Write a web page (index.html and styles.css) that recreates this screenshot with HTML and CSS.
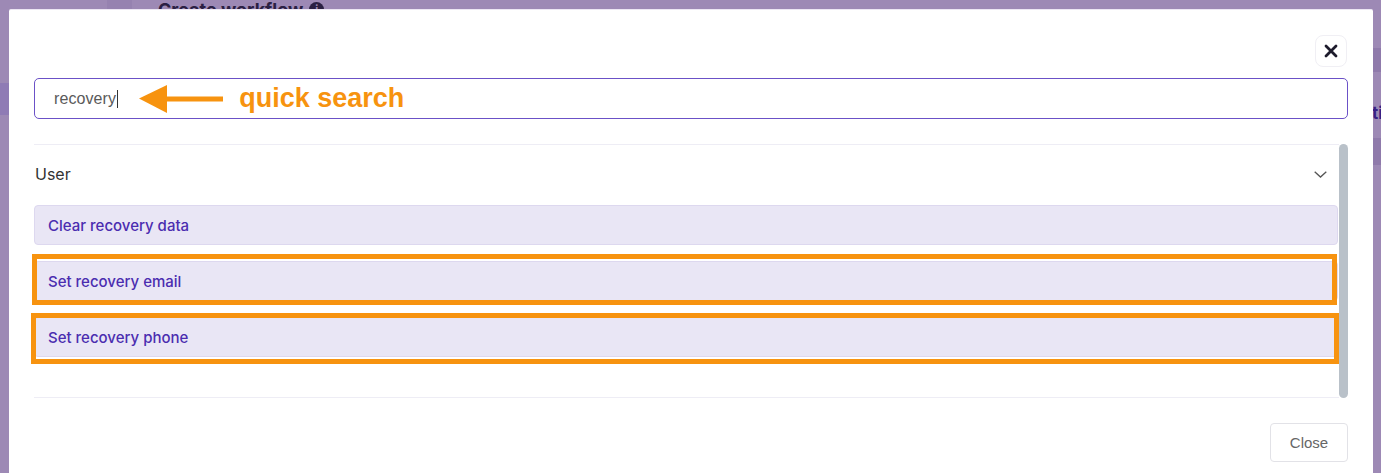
FILE: index.html
```html
<!DOCTYPE html>
<html lang="en">
<head>
<meta charset="utf-8">
<title>Quick search</title>
<link rel="stylesheet" href="styles.css">
</head>
<body>
<div class="page">
  <div class="page-top">
    <div class="page-nub"></div>
    <div class="page-title">Create workflow <span class="info-dot">i</span></div>
  </div>
  <div class="page-row band-right"></div>
  <div class="page-row band-left"></div>
  <div class="page-row text-right"><span>ti</span></div>
  <div class="page-row band-right band-low"></div>
</div>

<div class="modal">
  <div class="modal-head">
    <button class="icon-btn" aria-label="Close">
      <svg width="14" height="14" viewBox="0 0 14 14"><path d="M2 2 L12 12 M12 2 L2 12" stroke="#1d1b2c" stroke-width="2.8" stroke-linecap="round" fill="none"/></svg>
    </button>
  </div>

  <div class="search">
    <span class="search-text">recovery</span><span class="caret"></span>
    <svg class="arrow" width="84" height="28" viewBox="0 0 84 28"><polygon points="0,13.5 28,0 28,28" fill="#f7930f"/><rect x="27" y="11.5" width="57" height="5" fill="#f7930f"/></svg>
    <span class="annot-label">quick search</span>
  </div>

  <div class="results">
    <div class="results-list">
      <div class="group-head">
        <span class="group-name">User</span>
        <svg width="13" height="7" viewBox="0 0 13 7"><path d="M0.7 0.7 L6.5 6 L12.3 0.7" stroke="#555" stroke-width="1.3" fill="none"/></svg>
      </div>
      <div class="items">
        <div class="item">Clear recovery data</div>
        <div class="item marked mark-a">Set recovery email</div>
        <div class="item marked mark-b">Set recovery phone</div>
      </div>
    </div>
    <div class="scrollbar"></div>
  </div>

  <div class="modal-foot">
    <button class="btn">Close</button>
  </div>
</div>
</body>
</html>
```

FILE: styles.css
```css
* { box-sizing: border-box; }

html, body {
  margin: 0;
  height: 100%;
  overflow: hidden;
}

body {
  background: #9d89b5;
  font-family: Inter, "Liberation Sans", sans-serif;
  position: relative;
}

/* page behind the overlay */
.page {
  display: flex;
  flex-direction: column;
}

.page-top {
  height: 9px;
  display: flex;
  align-items: flex-end;
}

.page-nub {
  width: 25px;
  height: 9px;
  margin-left: 107px;
  background: #9682b0;
}

.page-title {
  margin-left: 26px;
  font-family: Inter, "Liberation Sans", sans-serif;
  font-weight: 700;
  font-size: 18px;
  line-height: 20px;
  color: #2b2043;
  transform: translateY(5px);
  display: flex;
  align-items: center;
  gap: 6px;
  height: 9px;
  overflow: visible;
  white-space: nowrap;
}

.info-dot {
  width: 15px;
  height: 15px;
  border-radius: 50%;
  background: #2b2043;
  color: #9d89b5;
  font-size: 11px;
  line-height: 15px;
  text-align: center;
}

.page-row {
  display: flex;
  justify-content: flex-end;
}

.band-right {
  height: 24px;
  margin-top: 39px;
  background: linear-gradient(to right, transparent 1373px, #8f7aab 1373px);
}

.band-left {
  height: 32px;
  margin-top: 11px;
  background: linear-gradient(to right, #8f7bb5 9px, transparent 9px);
}

.text-right {
  height: 20px;
  margin-top: -12px;
  font-weight: 700;
  font-size: 17px;
  color: #3a1f84;
}

.text-right span {
  width: 9px;
  overflow: hidden;
  display: block;
  white-space: nowrap;
}

.band-low {
  margin-top: 15px;
  height: 27px;
}

/* modal */
.modal {
  position: absolute;
  top: 9px;
  left: 9px;
  right: 8px;
  height: 480px;
  background: #fff;
  border-top: 1px solid #ece6f3;
  border-radius: 2px 2px 0 0;
  padding: 25px 25px 0 25px;
  display: flex;
  flex-direction: column;
}

.modal-head {
  display: flex;
  justify-content: flex-end;
}

.icon-btn {
  width: 32px;
  height: 32px;
  border: 1px solid #f0eff4;
  border-radius: 8px;
  background: #fff;
  padding: 0;
  display: flex;
  align-items: center;
  justify-content: center;
  margin-right: 1px;
}

.search {
  margin-top: 11px;
  height: 41px;
  border: 1px solid #6b51c7;
  border-radius: 5px;
  display: flex;
  align-items: center;
  padding-left: 19px;
}

.search-text {
  font-family: "Liberation Sans", Arial, sans-serif;
  font-size: 16px;
  color: #5a5a5a;
  letter-spacing: 0.1px;
}

.caret {
  width: 1px;
  height: 18px;
  background: #333;
  margin-left: 1px;
}

.arrow {
  margin-left: 21px;
  flex: none;
}

.annot-label {
  margin-left: 16px;
  font-family: "Liberation Sans", Arial, sans-serif;
  font-weight: 700;
  font-size: 27px;
  color: #f7930f;
  line-height: 30px;
  margin-top: -2px;
}

.results {
  margin-top: 25px;
  display: flex;
}

.results-list {
  flex: 1;
  border-top: 1px solid #eeedf5;
  border-bottom: 1px solid #eeedf5;
  padding-bottom: 40px;
}

.group-head {
  display: flex;
  justify-content: space-between;
  align-items: center;
  padding: 17px 12px 0 1px;
  height: 41px;
  margin-bottom: 19px;
}

.group-name {
  font-size: 16px;
  line-height: 24px;
  color: #333;
}

.items {
  display: flex;
  flex-direction: column;
  gap: 16px;
  margin-right: 1px;
}

.item {
  height: 40px;
  background: #e9e6f5;
  border: 1px solid #ddd8ef;
  border-radius: 4px;
  padding-left: 13px;
  display: flex;
  align-items: center;
  font-size: 15px;
  font-weight: 500;
  color: #4b2db0;
  position: relative;
}

.marked::after {
  content: "";
  position: absolute;
  border: 5px solid #f7930f;
}

.mark-a::after {
  top: -8px;
  left: -3px;
  right: 0;
  bottom: -5px;
}

.mark-b::after {
  top: -5px;
  left: -4px;
  right: -2px;
  bottom: -8px;
}

.scrollbar {
  width: 9px;
  background: #b9c1c9;
  border-radius: 5px;
  margin-left: 0;
}

.modal-foot {
  display: flex;
  justify-content: flex-end;
  padding-top: 25px;
}

.btn {
  width: 78px;
  height: 39px;
  border: 1px solid #e2e2e7;
  border-radius: 4px;
  background: #fff;
  font-family: "Liberation Sans", Arial, sans-serif;
  font-size: 15px;
  color: #666;
  padding: 0;
}
```
